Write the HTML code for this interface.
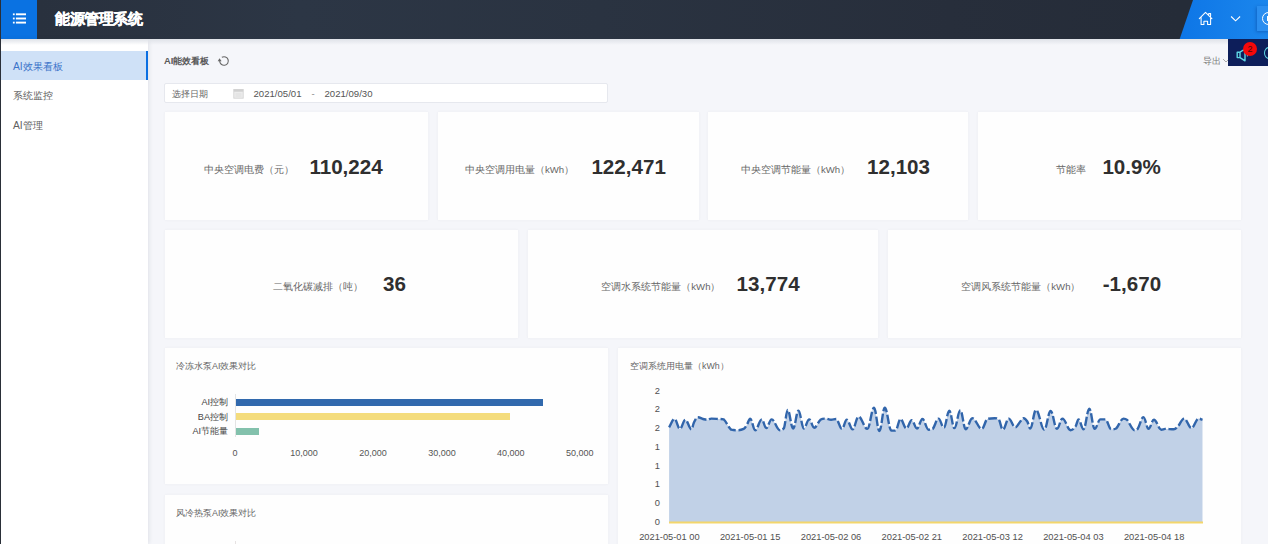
<!DOCTYPE html>
<html><head><meta charset="utf-8">
<style>
*{box-sizing:border-box;margin:0;padding:0}
html,body{width:1268px;height:544px;overflow:hidden;background:#f5f6fa;font-family:"Liberation Sans",sans-serif;position:relative}
.abs{position:absolute}
#hdr{left:0;top:0;width:1268px;height:39px;background:linear-gradient(90deg,#29313e 40px,#2c3645 300px,#2a3341 600px,#272e3b 950px,#252c38 1180px)}
#menu{left:1px;top:0;width:36px;height:39px;background:#0a72e2}
#title{left:55px;top:9px;letter-spacing:-0.45px;font-size:15px;font-weight:bold;color:#fff;-webkit-text-stroke:0.35px #fff;line-height:20px;white-space:nowrap}
#para{left:1170px;top:0;width:98px;height:39px;background:linear-gradient(90deg,#0c74e6,#1b86ec);clip-path:polygon(23px 0,98px 0,98px 39px,9.7px 39px)}
#side{left:0;top:39px;width:148px;height:505px;background:#fff;box-shadow:1px 0 4px rgba(40,50,70,.10)}
#lborder{left:0;top:0;width:1.2px;height:544px;background:#2a2f38}
.si{left:13px;font-size:10.3px;color:#606060;white-space:nowrap;line-height:14px}
#act{left:1px;top:51px;width:147px;height:29px;background:#cfe1f7}
#actbar{left:146px;top:51px;width:2px;height:29px;background:#0b6fe2}
#shadow{left:0;top:39px;width:1268px;height:6px;background:linear-gradient(#dfe2e8,rgba(244,245,249,0))}
.card{position:absolute;background:#fefefe;box-shadow:0 0 3px rgba(60,60,70,.05)}
.lbl{position:absolute;font-size:9.6px;color:#666;white-space:nowrap;line-height:12px}
.num{position:absolute;font-size:20.6px;font-weight:bold;color:#2f2f2f;white-space:nowrap;line-height:24px}
.ct{font-size:8.9px;color:#666;line-height:12px;white-space:nowrap}
.yl{font-size:9.1px;color:#444;line-height:12px;white-space:nowrap;text-align:right}
.xl{font-size:9px;color:#555;line-height:12px;white-space:nowrap;text-align:center}
.yl2{font-size:9.3px;color:#505050;line-height:12px;text-align:right}
.xl2{font-size:9.3px;color:#505050;line-height:12px;white-space:nowrap;text-align:center}
</style></head><body>
<div id="hdr" class="abs"></div>
<div id="menu" class="abs"></div>
<div id="title" class="abs">能源管理系统</div>
<div id="para" class="abs"></div>
<div id="side" class="abs"></div>
<div id="shadow" class="abs"></div>
<div id="act" class="abs"></div>
<div id="actbar" class="abs"></div>
<div class="abs si" style="top:59.7px;color:#3b73c9">AI效果看板</div>
<div class="abs si" style="top:88.5px">系统监控</div>
<div class="abs si" style="top:118.5px">AI管理</div>
<div id="lborder" class="abs"></div>

<!-- cards row1 -->
<div class="card" style="left:165px;top:112px;width:263px;height:108px"></div>
<div class="card" style="left:438px;top:112px;width:261px;height:108px"></div>
<div class="card" style="left:708px;top:112px;width:260px;height:108px"></div>
<div class="card" style="left:978px;top:112px;width:263px;height:108px"></div>
<!-- row2 -->
<div class="card" style="left:165px;top:230px;width:353px;height:108px"></div>
<div class="card" style="left:528px;top:230px;width:350px;height:108px"></div>
<div class="card" style="left:888px;top:230px;width:353px;height:108px"></div>
<!-- row3 -->
<div class="card" style="left:165px;top:348px;width:443px;height:136px"></div>
<div class="card" style="left:165px;top:495px;width:443px;height:60px"></div>
<div class="card" style="left:618px;top:348px;width:623px;height:200px"></div>


<!-- menu icon -->
<svg class="abs" style="left:12px;top:13px" width="15" height="11" viewBox="0 0 15 11">
<g fill="#fff"><rect x="0.9" y="0.4" width="1.8" height="1.8"/><rect x="0.9" y="4.6" width="1.8" height="1.8"/><rect x="0.9" y="8.7" width="1.8" height="1.8"/>
<rect x="3.9" y="0.35" width="10.1" height="1.9"/><rect x="3.9" y="4.55" width="10.1" height="1.9"/><rect x="3.9" y="8.65" width="10.1" height="1.9"/></g></svg>
<!-- home icon -->
<svg class="abs" style="left:1198px;top:11px" width="16" height="16" viewBox="0 0 16 16">
<path d="M1.3 7.6 L7.5 1.4 L13.9 7.6 M3.1 6.1 V13.4 H5.9 V10.3 H9.6 V13.4 H12.6 V6.1 M10.7 3.2 V2.6 H12.6 V5" fill="none" stroke="#fff" stroke-width="1.05" stroke-linejoin="round" stroke-linecap="round"/></svg>
<!-- chevron -->
<svg class="abs" style="left:1230px;top:15px" width="12" height="8" viewBox="0 0 12 8">
<path d="M1.1 1.5 L5.6 5.8 L10.1 1.5" fill="none" stroke="#fff" stroke-width="1.1"/></svg>
<!-- right btn -->
<div class="abs" style="left:1257px;top:6px;width:20px;height:25px;background:#2a8ef0;box-shadow:-1px 1px 3px rgba(0,40,120,.35)"></div>
<div class="abs" style="left:1262px;top:11.5px;width:13.8px;height:13.8px;border:1.3px solid #fff;border-radius:50%"></div>
<div class="abs" style="left:1266.5px;top:16px;width:2px;height:5px;background:#fff"></div>
<!-- page title -->
<div class="abs" style="left:164px;top:55px;font-size:9.4px;font-weight:bold;color:#5a5a5a;line-height:12px;white-space:nowrap">AI能效看板</div>
<svg class="abs" style="left:217px;top:54px" width="13" height="13" viewBox="0 0 13 13">
<path d="M4.85 3.28 A4.3 4.3 0 1 1 2.7 7" fill="none" stroke="#666" stroke-width="1.1"/><path d="M0.7 7.2 L4.6 7.2 L2.5 4.3 Z" fill="#666"/></svg>
<div class="abs" style="left:1203px;top:55px;font-size:9.2px;color:#777;line-height:12px;white-space:nowrap">导出</div>
<svg class="abs" style="left:1222px;top:58px" width="8" height="6" viewBox="0 0 8 6"><path d="M1 1 L4 4 L7 1" fill="none" stroke="#aaa" stroke-width="1"/></svg>
<!-- notification -->
<div class="abs" style="left:1228px;top:39px;width:40px;height:27px;background:#0d1e5a"></div>
<svg class="abs" style="left:1236px;top:48px" width="14" height="14" viewBox="0 0 14 14">
<path d="M1.2 4.2 H4 L9 1 V12.8 L4 9.6 H1.2 Z M4 4.2 V9.6" fill="none" stroke="#5fd6e4" stroke-width="1.4" stroke-linejoin="round"/><path d="M11 6 Q12.3 7 11 8.3" fill="none" stroke="#5fd6e4" stroke-width="1.2"/></svg>
<div class="abs" style="left:1243px;top:42px;width:14px;height:14px;border-radius:50%;background:#f5080a;color:#4a0a0a;font-size:9px;line-height:14px;text-align:center">2</div>
<div class="abs" style="left:1264px;top:47px;width:10px;height:12px;border:1.3px solid #5fd6e4;border-radius:50%"></div>
<!-- date picker -->
<div class="abs" style="left:164px;top:83px;width:444px;height:20px;background:#fff;border:1px solid #e6e8ee;border-radius:2px"></div>
<div class="abs" style="left:172px;top:88px;font-size:8.8px;color:#666;line-height:12px;white-space:nowrap">选择日期</div>
<svg class="abs" style="left:233px;top:88px" width="11" height="11" viewBox="0 0 11 11">
<rect x="0.8" y="1.5" width="9.4" height="8.7" fill="#ececec" stroke="#d4d4d4" stroke-width="0.9"/><rect x="0.8" y="1.5" width="9.4" height="2.2" fill="#d0d0d0"/><path d="M2.5 6 H8.5 M2.5 8 H8.5" stroke="#dadada" stroke-width="0.7"/></svg>
<div class="abs" style="left:253.5px;top:87.5px;font-size:9.6px;color:#555;line-height:12px;white-space:nowrap">2021/05/01</div>
<div class="abs" style="left:311.5px;top:87.5px;font-size:9.6px;color:#888;line-height:12px">-</div>
<div class="abs" style="left:324.5px;top:87.5px;font-size:9.6px;color:#555;line-height:12px;white-space:nowrap">2021/09/30</div>
<div class="lbl" style="left:203.7px;top:164px">中央空调电费（元）</div>
<div class="num" style="left:309.4px;top:155px">110,224</div>
<div class="lbl" style="left:465px;top:164px">中央空调用电量（kWh）</div>
<div class="num" style="left:591.4px;top:155px">122,471</div>
<div class="lbl" style="left:740.9px;top:164px">中央空调节能量（kWh）</div>
<div class="num" style="left:867px;top:155px">12,103</div>
<div class="lbl" style="left:1055.5px;top:164px">节能率</div>
<div class="num" style="left:1102.4px;top:155px">10.9%</div>
<div class="lbl" style="left:272.6px;top:281px">二氧化碳减排（吨）</div>
<div class="num" style="left:383px;top:272px">36</div>
<div class="lbl" style="left:601.3px;top:281px">空调水系统节能量（kWh）</div>
<div class="num" style="left:736.6px;top:272px">13,774</div>
<div class="lbl" style="left:961.3px;top:281px">空调风系统节能量（kWh）</div>
<div class="num" style="left:1102.7px;top:272px">-1,670</div>

<!-- chart 1 -->
<div class="abs ct" style="left:176px;top:360px">冷冻水泵AI效果对比</div>
<div class="abs" style="left:235px;top:394px;width:1px;height:43px;background:#e4e4e4"></div>
<div class="abs" style="left:236px;top:399px;width:307px;height:7px;background:#3169ad"></div>
<div class="abs" style="left:236px;top:413px;width:274px;height:7px;background:#f4dc7c"></div>
<div class="abs" style="left:236px;top:428px;width:22.5px;height:7px;background:#83c1ac"></div>
<div class="abs yl" style="right:1040px;top:396px">AI控制</div>
<div class="abs yl" style="right:1040px;top:410.5px">BA控制</div>
<div class="abs yl" style="right:1040px;top:425px">AI节能量</div>
<div class="abs xl" style="left:205.0px;top:447px;width:60px">0</div>
<div class="abs xl" style="left:273.9px;top:447px;width:60px">10,000</div>
<div class="abs xl" style="left:342.9px;top:447px;width:60px">20,000</div>
<div class="abs xl" style="left:411.9px;top:447px;width:60px">30,000</div>
<div class="abs xl" style="left:480.8px;top:447px;width:60px">40,000</div>
<div class="abs xl" style="left:549.8px;top:447px;width:60px">50,000</div>

<!-- chart 2 -->
<div class="abs ct" style="left:176px;top:507px">风冷热泵AI效果对比</div>
<div class="abs" style="left:235px;top:541px;width:1px;height:3px;background:#e6e2e2"></div>
<!-- chart 3 -->
<!--LINESVG-->
<svg class="abs" style="left:0;top:0" width="1268" height="544" viewBox="0 0 1268 544">
<path d="M669.1 427.3 C671.2 424.1 672.4 419.0 674.5 419.0 C676.6 419.0 677.8 428.9 679.9 428.9 C682.0 428.9 683.2 419.8 685.3 419.8 C687.7 419.8 689.1 429.3 691.5 429.3 C692.5 429.3 693.0 424.1 694.0 422.3 C695.5 419.5 696.5 417.3 698.0 417.3 C699.9 417.3 701.1 418.5 703.0 419.0 C704.6 419.4 705.6 419.8 707.2 419.8 C708.8 419.8 709.7 418.6 711.3 418.6 C714.2 418.6 715.9 418.8 718.8 419.0 C720.7 419.1 721.8 419.0 723.7 419.4 C726.6 421.9 728.3 427.4 731.2 429.7 C733.4 430.2 734.8 430.2 737.0 430.2 C739.5 430.2 741.1 430.2 743.6 428.9 C744.9 428.2 745.6 426.8 746.9 424.8 C748.2 422.8 748.9 418.6 750.2 418.6 C752.1 418.6 753.3 430.2 755.2 430.2 C757.7 430.2 759.3 419.4 761.8 419.4 C763.5 419.4 764.5 428.1 766.2 428.1 C768.3 428.1 769.5 419.4 771.6 419.4 C774.8 419.4 776.7 430.2 779.9 430.2 C781.5 430.2 782.4 430.2 784.0 428.0 C785.4 424.3 786.3 409.9 787.7 409.9 C789.8 409.9 791.0 428.5 793.1 428.5 C795.2 428.5 796.4 410.7 798.5 410.7 C800.5 410.7 801.8 428.5 803.8 428.5 C805.9 428.5 807.1 419.4 809.2 419.4 C811.1 419.4 812.3 427.7 814.2 427.7 C816.6 427.7 818.0 421.8 820.4 419.8 C822.3 418.6 823.4 418.6 825.3 418.6 C827.5 418.6 828.9 419.8 831.1 419.8 C833.0 419.8 834.2 419.0 836.1 419.0 C838.3 419.0 839.7 428.9 841.9 428.9 C843.8 428.9 844.9 419.8 846.8 419.8 C849.0 419.8 850.4 429.3 852.6 429.3 C854.9 429.3 856.2 416.7 858.5 416.7 C861.9 416.7 864.0 428.9 867.4 428.9 C869.9 428.9 871.5 407.8 874.0 407.8 C876.1 407.8 877.3 431.0 879.4 431.0 C881.5 431.0 882.7 407.8 884.8 407.8 C887.3 407.8 888.9 430.6 891.4 430.6 C893.0 430.6 893.9 430.6 895.5 430.6 C897.4 430.6 898.6 419.0 900.5 419.0 C902.7 419.0 904.1 428.5 906.3 428.5 C908.4 428.5 909.6 420.2 911.7 420.2 C913.7 420.2 915.0 428.5 917.0 428.5 C919.1 428.5 920.3 419.0 922.4 419.0 C924.8 419.0 926.2 429.7 928.6 429.7 C930.2 429.7 931.2 429.7 932.8 428.9 C935.0 426.4 936.3 418.6 938.5 418.6 C940.6 418.6 941.8 427.7 943.9 427.7 C946.0 427.7 947.2 410.7 949.3 410.7 C951.3 410.7 952.4 428.1 954.4 428.1 C956.7 428.1 958.0 410.3 960.3 410.3 C962.4 410.3 963.6 429.3 965.7 429.3 C968.2 429.3 969.8 418.2 972.3 418.2 C976.0 418.2 978.1 428.9 981.8 428.9 C983.9 428.9 985.1 420.7 987.2 419.0 C990.1 418.2 991.8 418.2 994.7 418.2 C996.3 418.2 997.2 418.2 998.8 419.4 C1000.4 421.6 1001.3 429.7 1002.9 429.7 C1005.1 429.7 1006.5 418.6 1008.7 418.6 C1011.2 418.6 1012.8 427.3 1015.3 427.3 C1017.2 427.3 1018.4 423.6 1020.3 421.5 C1021.6 420.1 1022.3 418.2 1023.6 418.2 C1025.0 418.2 1025.9 419.3 1027.3 421.5 C1028.4 423.2 1029.1 428.5 1030.2 428.5 C1032.4 428.5 1033.8 409.9 1036.0 409.9 C1039.2 409.9 1041.1 429.7 1044.3 429.7 C1046.7 429.7 1048.2 411.0 1050.6 411.0 C1053.1 411.0 1054.5 428.9 1057.0 428.9 C1059.1 428.9 1060.3 418.6 1062.4 418.6 C1065.6 418.6 1067.4 430.2 1070.6 430.2 C1072.5 430.2 1073.7 429.0 1075.6 426.4 C1076.7 424.9 1077.4 419.4 1078.5 419.4 C1080.4 419.4 1081.6 429.3 1083.5 429.3 C1085.7 429.3 1087.1 408.6 1089.3 408.6 C1091.3 408.6 1092.6 428.9 1094.6 428.9 C1096.8 428.9 1098.2 419.4 1100.4 419.4 C1102.3 419.4 1103.5 419.4 1105.4 419.4 C1107.6 419.4 1109.0 429.3 1111.2 429.3 C1113.1 429.3 1114.2 429.3 1116.1 428.5 C1118.9 426.0 1120.7 418.6 1123.5 418.6 C1124.8 418.6 1125.7 418.6 1127.0 419.8 C1129.9 422.9 1131.7 430.2 1134.6 430.2 C1135.8 430.2 1136.5 430.2 1137.7 428.9 C1139.9 425.6 1141.3 417.1 1143.5 417.1 C1145.4 417.1 1146.6 428.9 1148.5 428.9 C1150.6 428.9 1151.8 419.8 1153.9 419.8 C1156.8 419.8 1158.5 429.7 1161.4 429.7 C1162.8 429.7 1163.7 428.9 1165.1 428.9 C1168.4 428.9 1170.5 429.3 1173.8 429.3 C1175.4 429.3 1176.3 428.0 1177.9 426.4 C1180.3 423.9 1181.7 418.6 1184.1 418.6 C1186.9 418.6 1188.7 428.1 1191.5 428.1 C1194.2 428.1 1195.9 418.6 1198.6 418.6 C1200.1 418.6 1201.0 419.3 1202.5 419.8 L1202.5 522.5 L669.1 522.5 Z" fill="#c1d1e7"/>
<path d="M669.1 427.3 C671.2 424.1 672.4 419.0 674.5 419.0 C676.6 419.0 677.8 428.9 679.9 428.9 C682.0 428.9 683.2 419.8 685.3 419.8 C687.7 419.8 689.1 429.3 691.5 429.3 C692.5 429.3 693.0 424.1 694.0 422.3 C695.5 419.5 696.5 417.3 698.0 417.3 C699.9 417.3 701.1 418.5 703.0 419.0 C704.6 419.4 705.6 419.8 707.2 419.8 C708.8 419.8 709.7 418.6 711.3 418.6 C714.2 418.6 715.9 418.8 718.8 419.0 C720.7 419.1 721.8 419.0 723.7 419.4 C726.6 421.9 728.3 427.4 731.2 429.7 C733.4 430.2 734.8 430.2 737.0 430.2 C739.5 430.2 741.1 430.2 743.6 428.9 C744.9 428.2 745.6 426.8 746.9 424.8 C748.2 422.8 748.9 418.6 750.2 418.6 C752.1 418.6 753.3 430.2 755.2 430.2 C757.7 430.2 759.3 419.4 761.8 419.4 C763.5 419.4 764.5 428.1 766.2 428.1 C768.3 428.1 769.5 419.4 771.6 419.4 C774.8 419.4 776.7 430.2 779.9 430.2 C781.5 430.2 782.4 430.2 784.0 428.0 C785.4 424.3 786.3 409.9 787.7 409.9 C789.8 409.9 791.0 428.5 793.1 428.5 C795.2 428.5 796.4 410.7 798.5 410.7 C800.5 410.7 801.8 428.5 803.8 428.5 C805.9 428.5 807.1 419.4 809.2 419.4 C811.1 419.4 812.3 427.7 814.2 427.7 C816.6 427.7 818.0 421.8 820.4 419.8 C822.3 418.6 823.4 418.6 825.3 418.6 C827.5 418.6 828.9 419.8 831.1 419.8 C833.0 419.8 834.2 419.0 836.1 419.0 C838.3 419.0 839.7 428.9 841.9 428.9 C843.8 428.9 844.9 419.8 846.8 419.8 C849.0 419.8 850.4 429.3 852.6 429.3 C854.9 429.3 856.2 416.7 858.5 416.7 C861.9 416.7 864.0 428.9 867.4 428.9 C869.9 428.9 871.5 407.8 874.0 407.8 C876.1 407.8 877.3 431.0 879.4 431.0 C881.5 431.0 882.7 407.8 884.8 407.8 C887.3 407.8 888.9 430.6 891.4 430.6 C893.0 430.6 893.9 430.6 895.5 430.6 C897.4 430.6 898.6 419.0 900.5 419.0 C902.7 419.0 904.1 428.5 906.3 428.5 C908.4 428.5 909.6 420.2 911.7 420.2 C913.7 420.2 915.0 428.5 917.0 428.5 C919.1 428.5 920.3 419.0 922.4 419.0 C924.8 419.0 926.2 429.7 928.6 429.7 C930.2 429.7 931.2 429.7 932.8 428.9 C935.0 426.4 936.3 418.6 938.5 418.6 C940.6 418.6 941.8 427.7 943.9 427.7 C946.0 427.7 947.2 410.7 949.3 410.7 C951.3 410.7 952.4 428.1 954.4 428.1 C956.7 428.1 958.0 410.3 960.3 410.3 C962.4 410.3 963.6 429.3 965.7 429.3 C968.2 429.3 969.8 418.2 972.3 418.2 C976.0 418.2 978.1 428.9 981.8 428.9 C983.9 428.9 985.1 420.7 987.2 419.0 C990.1 418.2 991.8 418.2 994.7 418.2 C996.3 418.2 997.2 418.2 998.8 419.4 C1000.4 421.6 1001.3 429.7 1002.9 429.7 C1005.1 429.7 1006.5 418.6 1008.7 418.6 C1011.2 418.6 1012.8 427.3 1015.3 427.3 C1017.2 427.3 1018.4 423.6 1020.3 421.5 C1021.6 420.1 1022.3 418.2 1023.6 418.2 C1025.0 418.2 1025.9 419.3 1027.3 421.5 C1028.4 423.2 1029.1 428.5 1030.2 428.5 C1032.4 428.5 1033.8 409.9 1036.0 409.9 C1039.2 409.9 1041.1 429.7 1044.3 429.7 C1046.7 429.7 1048.2 411.0 1050.6 411.0 C1053.1 411.0 1054.5 428.9 1057.0 428.9 C1059.1 428.9 1060.3 418.6 1062.4 418.6 C1065.6 418.6 1067.4 430.2 1070.6 430.2 C1072.5 430.2 1073.7 429.0 1075.6 426.4 C1076.7 424.9 1077.4 419.4 1078.5 419.4 C1080.4 419.4 1081.6 429.3 1083.5 429.3 C1085.7 429.3 1087.1 408.6 1089.3 408.6 C1091.3 408.6 1092.6 428.9 1094.6 428.9 C1096.8 428.9 1098.2 419.4 1100.4 419.4 C1102.3 419.4 1103.5 419.4 1105.4 419.4 C1107.6 419.4 1109.0 429.3 1111.2 429.3 C1113.1 429.3 1114.2 429.3 1116.1 428.5 C1118.9 426.0 1120.7 418.6 1123.5 418.6 C1124.8 418.6 1125.7 418.6 1127.0 419.8 C1129.9 422.9 1131.7 430.2 1134.6 430.2 C1135.8 430.2 1136.5 430.2 1137.7 428.9 C1139.9 425.6 1141.3 417.1 1143.5 417.1 C1145.4 417.1 1146.6 428.9 1148.5 428.9 C1150.6 428.9 1151.8 419.8 1153.9 419.8 C1156.8 419.8 1158.5 429.7 1161.4 429.7 C1162.8 429.7 1163.7 428.9 1165.1 428.9 C1168.4 428.9 1170.5 429.3 1173.8 429.3 C1175.4 429.3 1176.3 428.0 1177.9 426.4 C1180.3 423.9 1181.7 418.6 1184.1 418.6 C1186.9 418.6 1188.7 428.1 1191.5 428.1 C1194.2 428.1 1195.9 418.6 1198.6 418.6 C1200.1 418.6 1201.0 419.3 1202.5 419.8" fill="none" stroke="#3165ab" stroke-width="2.4" stroke-dasharray="9 2.6"/>
<rect x="669" y="521.5" width="534" height="2" fill="#f3d66b"/>
</svg>
<!--/LINESVG-->

<div class="abs ct" style="left:630px;top:360px">空调系统用电量（kWh）</div>
<div class="abs yl2" style="left:640px;top:384.5px;width:20px">2</div>
<div class="abs yl2" style="left:640px;top:403.3px;width:20px">2</div>
<div class="abs yl2" style="left:640px;top:422.0px;width:20px">2</div>
<div class="abs yl2" style="left:640px;top:440.8px;width:20px">1</div>
<div class="abs yl2" style="left:640px;top:459.6px;width:20px">1</div>
<div class="abs yl2" style="left:640px;top:478.4px;width:20px">1</div>
<div class="abs yl2" style="left:640px;top:497.1px;width:20px">0</div>
<div class="abs yl2" style="left:640px;top:515.9px;width:20px">0</div>
<div class="abs xl2" style="left:629.4px;top:530.5px;width:80px">2021-05-01 00</div>
<div class="abs xl2" style="left:710.2px;top:530.5px;width:80px">2021-05-01 15</div>
<div class="abs xl2" style="left:791.0px;top:530.5px;width:80px">2021-05-02 06</div>
<div class="abs xl2" style="left:871.8px;top:530.5px;width:80px">2021-05-02 21</div>
<div class="abs xl2" style="left:952.6px;top:530.5px;width:80px">2021-05-03 12</div>
<div class="abs xl2" style="left:1033.4px;top:530.5px;width:80px">2021-05-04 03</div>
<div class="abs xl2" style="left:1114.2px;top:530.5px;width:80px">2021-05-04 18</div>
</body></html>
